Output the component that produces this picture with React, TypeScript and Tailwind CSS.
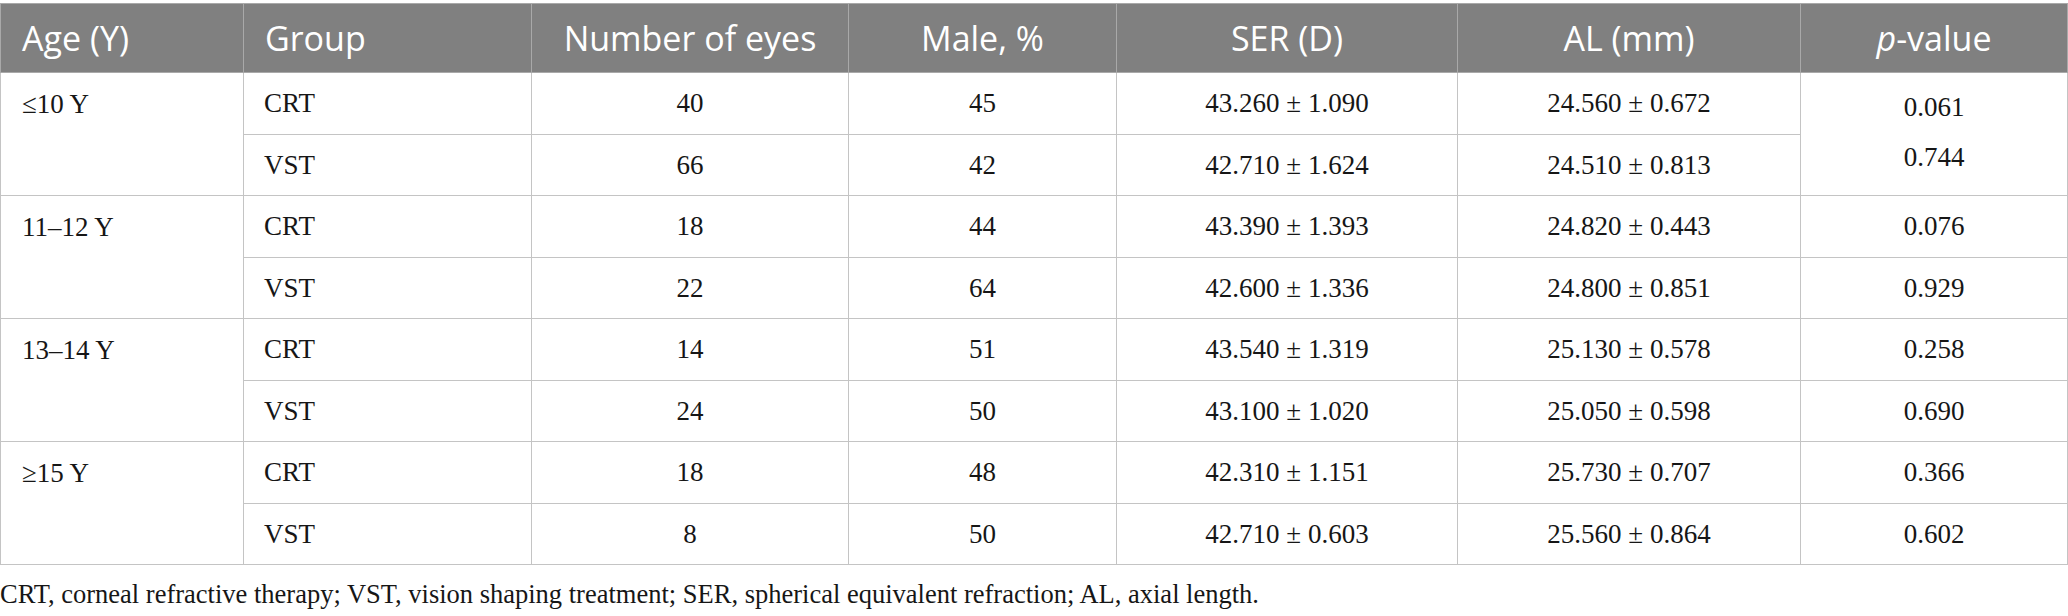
import React from "react";

type Row = {
  group: string;
  eyes: string;
  male: string;
  ser: string;
  al: string;
  p?: string;
};

type Block = {
  age: string;
  rows: [Row, Row];
  mergedP?: [string, string];
};

const blocks: Block[] = [
  {
    age: "≤10 Y",
    rows: [
      { group: "CRT", eyes: "40", male: "45", ser: "43.260 ± 1.090", al: "24.560 ± 0.672" },
      { group: "VST", eyes: "66", male: "42", ser: "42.710 ± 1.624", al: "24.510 ± 0.813" },
    ],
    mergedP: ["0.061", "0.744"],
  },
  {
    age: "11–12 Y",
    rows: [
      { group: "CRT", eyes: "18", male: "44", ser: "43.390 ± 1.393", al: "24.820 ± 0.443", p: "0.076" },
      { group: "VST", eyes: "22", male: "64", ser: "42.600 ± 1.336", al: "24.800 ± 0.851", p: "0.929" },
    ],
  },
  {
    age: "13–14 Y",
    rows: [
      { group: "CRT", eyes: "14", male: "51", ser: "43.540 ± 1.319", al: "25.130 ± 0.578", p: "0.258" },
      { group: "VST", eyes: "24", male: "50", ser: "43.100 ± 1.020", al: "25.050 ± 0.598", p: "0.690" },
    ],
  },
  {
    age: "≥15 Y",
    rows: [
      { group: "CRT", eyes: "18", male: "48", ser: "42.310 ± 1.151", al: "25.730 ± 0.707", p: "0.366" },
      { group: "VST", eyes: "8", male: "50", ser: "42.710 ± 0.603", al: "25.560 ± 0.864", p: "0.602" },
    ],
  },
];

const serif = "font-['Liberation_Serif','Times_New_Roman',serif]";
const td = "border border-[#c4c4c4] h-[61.5px] p-0 align-middle";
const th = "border border-[#a9a9a9] h-[69px] p-0 font-normal align-middle";

export default function App() {
  return (
    <div className="w-[2068px] bg-white pt-[3px]">
      <table className={`w-[2067px] table-fixed border-collapse text-[27px] text-[#161616] ${serif}`}>
        <colgroup>
          <col className="w-[243px]" />
          <col className="w-[288px]" />
          <col className="w-[317px]" />
          <col className="w-[268px]" />
          <col className="w-[341px]" />
          <col className="w-[343px]" />
          <col className="w-[267px]" />
        </colgroup>
        <thead>
          <tr className="bg-[#808080] text-white font-['Open_Sans','Noto_Sans',sans-serif] text-[34px] leading-none">
            <th className={`${th} text-left pl-[21px]`}>Age (Y)</th>
            <th className={`${th} text-left pl-[21px]`}>Group</th>
            <th className={`${th} text-center`}>Number of eyes</th>
            <th className={`${th} text-center`}>Male, %</th>
            <th className={`${th} text-center`}>SER (D)</th>
            <th className={`${th} text-center`}>AL (mm)</th>
            <th className={`${th} text-center`}>
              <span className="italic">p</span>-value
            </th>
          </tr>
        </thead>
        <tbody>
          {blocks.map((b) =>
            b.rows.map((r, i) => (
              <tr key={b.age + r.group}>
                {i === 0 && (
                  <td rowSpan={2} className={`${td} align-top`}>
                    <div className="h-[61.5px] flex items-center pl-[21px]">{b.age}</div>
                  </td>
                )}
                <td className={`${td} pl-[20px]`}>{r.group}</td>
                <td className={`${td} text-center`}>{r.eyes}</td>
                <td className={`${td} text-center`}>{r.male}</td>
                <td className={`${td} text-center`}>{r.ser}</td>
                <td className={`${td} text-center`}>{r.al}</td>
                {b.mergedP ? (
                  i === 0 && (
                    <td rowSpan={2} className={`${td} text-center`}>
                      <div className="flex flex-col items-center justify-center leading-[50px] pb-[4px]">
                        <span>{b.mergedP[0]}</span>
                        <span>{b.mergedP[1]}</span>
                      </div>
                    </td>
                  )
                ) : (
                  <td className={`${td} text-center`}>{r.p}</td>
                )}
              </tr>
            ))
          )}
        </tbody>
      </table>
      <p className={`mt-[14px] text-[26.5px] leading-[30px] text-[#161616] ${serif}`}>
        CRT, corneal refractive therapy; VST, vision shaping treatment; SER, spherical equivalent refraction; AL, axial length.
      </p>
    </div>
  );
}
